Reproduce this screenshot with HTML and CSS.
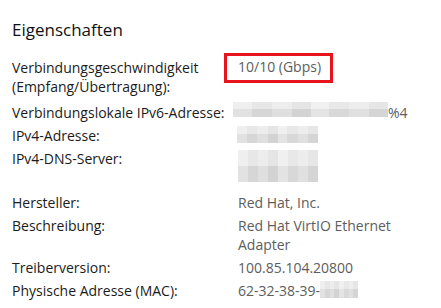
FILE: index.html
```html
<!DOCTYPE html>
<html lang="de">
<head>
    <meta charset="UTF-8">
    <title>Eigenschaften</title>
    <link rel="stylesheet" href="styles.css">
</head>
<body>
    <h2 class="title">Eigenschaften</h2>
    <div class="props">
        <div class="label gap-3">Verbindungsgeschwindigkeit<br>(Empfang/Übertragung):</div>
        <div class="value"><span class="mark">10/10 (Gbps)</span></div>

        <div class="label">Verbindungslokale IPv6-Adresse:</div>
        <div class="value"><span class="blur blur-v6"></span>%4</div>

        <div class="label">IPv4-Adresse:</div>
        <div class="value"><span class="blur blur-v4"></span></div>

        <div class="label gap-2">IPv4-DNS-Server:<br>&nbsp;</div>
        <div class="value"><span class="blur blur-dns"></span></div>

        <div class="label">Hersteller:</div>
        <div class="value">Red Hat, Inc.</div>

        <div class="label gap-1">Beschreibung:</div>
        <div class="value">Red Hat VirtIO Ethernet<br>Adapter</div>

        <div class="label">Treiberversion:</div>
        <div class="value">100.85.104.20800</div>

        <div class="label">Physische Adresse (MAC):</div>
        <div class="value">62-32-38-39-<span class="blur blur-mac"></span></div>
    </div>
</body>
</html>
```

FILE: styles.css
```css
body {
    margin: 0;
    padding: 0 12px;
    background: #ffffff;
    font-family: 'Open Sans', 'Noto Sans', sans-serif;
    font-size: 14px;
    color: #1b1b1b;
}
.title {
    margin: 18px 0 0;
    font-size: 17px;
    font-weight: 400;
    line-height: 24px;
    color: #111111;
}
.props {
    display: grid;
    grid-template-columns: 226px 1fr;
    row-gap: 4px;
    margin-top: 16px;
    line-height: 19px;
}
.gap-1 { padding-bottom: 1px; }
.gap-2 { padding-bottom: 2px; }
.gap-3 { padding-bottom: 3px; }
.value {
    color: #5d5d5d;
}
.mark {
    display: inline-block;
    vertical-align: top;
    margin: -5px 0 -6px -14px;
    padding: 2px 9px 4px 11px;
    border: 3px solid #e8141b;
    line-height: 18px;
}
.blur {
    display: inline-block;
    vertical-align: top;
    height: 17px;
    background:
        linear-gradient(180deg, rgba(255,255,255,0.35) 0 50%, rgba(0,0,0,0.02) 50%),
        linear-gradient(90deg, #e6e6e6 0 12%, #dadada 12% 25%, #e3e3e3 25% 38%, #d7d7d7 38% 50%, #e8e8e8 50% 62%, #dcdcdc 62% 75%, #e4e4e4 75% 88%, #d9d9d9 88%);
}
.blur-v6 {
    width: 155px;
    height: 15px;
    margin: -1px 0 0 -5px;
}
.blur-v4 {
    width: 81px;
    margin-left: -1px;
}
.blur-dns {
    width: 80px;
    height: 32px;
    margin-top: 1px;
}
.blur-mac {
    width: 38px;
}
```
